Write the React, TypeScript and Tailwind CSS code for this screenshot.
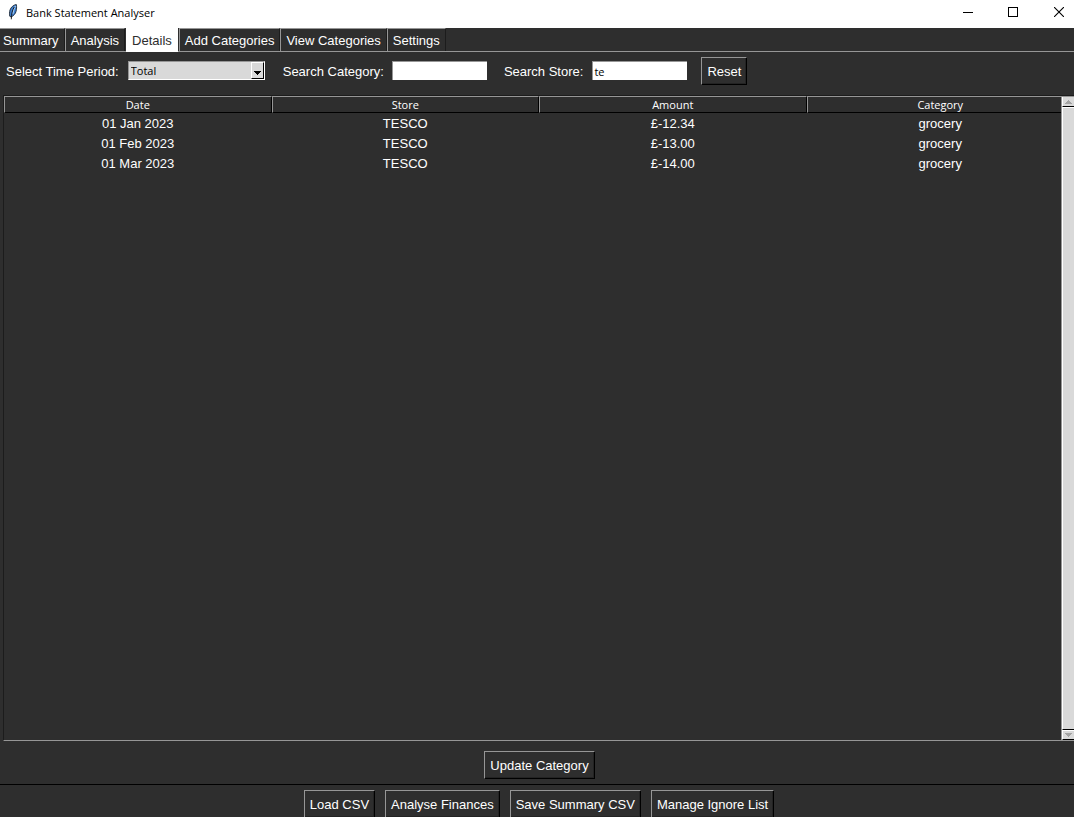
import React, { useState } from 'react';

const tabs = ['Summary', 'Analysis', 'Details', 'Add Categories', 'View Categories', 'Settings'];

const columns = ['Date', 'Store', 'Amount', 'Category'];

const transactions = [
  { date: '01 Jan 2023', store: 'TESCO', amount: '£-12.34', category: 'grocery' },
  { date: '01 Feb 2023', store: 'TESCO', amount: '£-13.00', category: 'grocery' },
  { date: '01 Mar 2023', store: 'TESCO', amount: '£-14.00', category: 'grocery' },
];

const actions = ['Load CSV', 'Analyse Finances', 'Save Summary CSV', 'Manage Ignore List'];

const FeatherIcon = () => (
  <svg width="16" height="16" viewBox="0 0 16 16" aria-hidden="true">
    <path d="M10.300 0.500C7.500 1 5 3 4 6c-.6 2-.7 4.500-.2 6.300L5.200 13C8 11.500 9.500 9.500 10 7.500c.6-2.300.8-4.500.3-7z" fill="#3f7fd0" stroke="#1c2733" strokeWidth="0.900" />
    <path d="M9.500 2C8 4 7.300 6.500 6.800 10" stroke="#a5d0fa" strokeWidth="1.200" fill="none" />
    <path d="M8.300 3C6.300 6 5.300 10 5.300 15.300" stroke="#111" strokeWidth="0.900" fill="none" />
  </svg>
);

const TitleBar = () => (
  <header className="flex h-7 shrink-0 items-start justify-between bg-white text-black">
    <div className="flex h-6 items-center gap-1 pl-[6px]">
      <FeatherIcon />
      <h1 className="pt-[2px] font-['Open_Sans',sans-serif] text-[11px] leading-4">Bank Statement Analyser</h1>
    </div>
    <div className="flex h-6 items-center">
      <button aria-label="Minimise" className="flex w-[45px] justify-center">
        <svg width="10" height="10" viewBox="0 0 10 10" shapeRendering="crispEdges">
          <path d="M0 5.500h10" stroke="#000" />
        </svg>
      </button>
      <button aria-label="Maximise" className="flex w-[45px] justify-center">
        <svg width="10" height="10" viewBox="0 0 10 10" shapeRendering="crispEdges">
          <rect x="0.500" y="0.500" width="9" height="9" fill="none" stroke="#000" />
        </svg>
      </button>
      <button aria-label="Close" className="flex w-[39px] justify-end pr-[10px]">
        <svg width="10" height="10" viewBox="0 0 10 10">
          <path d="M0 0l10 10M10 0L0 10" stroke="#000" strokeWidth="1.100" />
        </svg>
      </button>
    </div>
  </header>
);

const RaisedButton = ({ children, onClick }: { children: React.ReactNode; onClick?: () => void }) => (
  <button
    onClick={onClick}
    className="h-7 shrink-0 border border-t-[#969696] border-r-black border-b-black border-l-[#969696] px-[5px] pt-[2px] text-[13px] leading-4 shadow-[inset_-1px_-1px_0_#232323]"
  >
    {children}
  </button>
);

const TextField = ({ id, value, onChange }: { id: string; value: string; onChange: (value: string) => void }) => (
  <input
    id={id}
    type="text"
    value={value}
    onChange={(e) => onChange(e.target.value)}
    className="h-[19px] w-[95px] border-t border-l border-[#969696] bg-white px-px font-['Open_Sans',sans-serif] text-[11px] text-black outline-none"
  />
);

const ScrollBar = () => (
  <div className="absolute top-0 right-0 bottom-0 flex w-[13px] flex-col border-t border-l border-t-[#969696] border-l-[#969696] bg-[#d9d9d9]">
    <button aria-label="Scroll up" className="flex h-[10px] items-center justify-center border-b border-l border-b-black border-l-white">
      <svg width="7" height="4" viewBox="0 0 7 4" shapeRendering="crispEdges">
        <path d="M3 0h1v1h1v1h1v1h1v1H0V3h1V2h1V1h1z" fill="#a3a3a3" />
      </svg>
    </button>
    <div className="flex-1 border-t border-b border-l border-t-white border-b-black border-l-white" />
    <button aria-label="Scroll down" className="flex h-[10px] items-center justify-center border-t border-b border-l border-t-white border-b-black border-l-white">
      <svg width="7" height="4" viewBox="0 0 7 4" shapeRendering="crispEdges">
        <path d="M0 0h7v1H6v1H5v1H4v1H3V3H2V2H1V1H0z" fill="#a3a3a3" />
      </svg>
    </button>
  </div>
);

const App = () => {
  const [activeTab, setActiveTab] = useState('Details');
  const [period, setPeriod] = useState('Total');
  const [category, setCategory] = useState('');
  const [store, setStore] = useState('te');

  const handleReset = () => {
    setPeriod('Total');
    setCategory('');
    setStore('');
  };

  return (
    <div className="flex h-screen flex-col overflow-hidden bg-[#2e2e2e] font-['Liberation_Sans',Arial,sans-serif] text-[13px] leading-4 text-white">
      <TitleBar />

      {/* Tabs */}
      <nav className="flex h-6 shrink-0 border-b border-[#969696]">
        {tabs.map((tab, i) => (
          <button
            key={tab}
            onClick={() => setActiveTab(tab)}
            className={
              tab === activeTab
                ? '-mb-px ml-px border-x border-white bg-white px-[5px] pt-px text-[#2e2e2e]'
                : `border-t border-r border-t-[#969696] border-r-[#1c1c1c] pt-px ${i === 0 ? 'pl-[3px]' : 'border-l border-l-[#969696] pl-[5px]'} pr-[5px] [button.bg-white+&]:ml-px`
            }
          >
            {tab}
          </button>
        ))}
      </nav>

      {/* Filters */}
      <div className="flex h-[43px] shrink-0 items-center pb-[6px] pl-[6px]">
        <label htmlFor="period" className="pt-[3px] pr-[9px]">Select Time Period:</label>
        <div className="relative mr-[18px] flex">
          <select
            id="period"
            value={period}
            onChange={(e) => setPeriod(e.target.value)}
            className="h-[19px] w-[137px] appearance-none border border-t-[#969696] border-r-white border-b-white border-l-[#969696] bg-[#d9d9d9] px-[2px] font-['Open_Sans',sans-serif] text-[11px] leading-4 text-black outline-none"
          >
            <option>Total</option>
          </select>
          <span className="pointer-events-none absolute top-px right-px bottom-px flex w-[13px] items-end justify-center border border-t-white border-r-black border-b-black border-l-white pb-[3px]">
            <svg width="7" height="4" viewBox="0 0 7 4" shapeRendering="crispEdges">
              <path d="M0 0h7v1H6v1H5v1H4v1H3V3H2V2H1V1H0z" fill="#000" />
            </svg>
          </span>
        </div>
        <label htmlFor="category" className="pt-[3px] pr-2">Search Category:</label>
        <TextField id="category" value={category} onChange={setCategory} />
        <label htmlFor="store" className="pt-[3px] pr-[9px] pl-[17px]">Search Store:</label>
        <TextField id="store" value={store} onChange={setStore} />
        <div className="ml-[14px] flex">
          <RaisedButton onClick={handleReset}>Reset</RaisedButton>
        </div>
      </div>

      {/* Transactions */}
      <main className="relative ml-[3px] min-h-0 flex-1 border-t border-b border-l border-t-[#1c1c1c] border-b-[#969696] border-l-[#1c1c1c]">
        <table className="w-full table-fixed border-separate border-spacing-0 text-center">
          <thead>
            <tr>
              {columns.map((column) => (
                <th
                  key={column}
                  className="h-[17px] border border-t-[#969696] border-r-black border-b-black border-l-[#969696] p-0 font-['Open_Sans',sans-serif] text-[11px] leading-[15px] font-normal"
                >
                  {column}
                </th>
              ))}
            </tr>
          </thead>
          <tbody>
            {transactions.map((row) => (
              <tr key={row.date} className="h-5">
                <td className="p-0 pt-[2px]">{row.date}</td>
                <td className="p-0 pt-[2px]">{row.store}</td>
                <td className="p-0 pt-[2px]">{row.amount}</td>
                <td className="p-0 pt-[2px]">{row.category}</td>
              </tr>
            ))}
          </tbody>
        </table>
        <ScrollBar />
      </main>

      <div className="flex h-11 shrink-0 justify-center border-b border-black pt-[10px] pl-[5px]">
        <RaisedButton>Update Category</RaisedButton>
      </div>

      {/* Actions */}
      <footer className="flex h-8 shrink-0 justify-center gap-[10px] overflow-hidden pt-[5px] pl-[4px]">
        {actions.map((action) => (
          <RaisedButton key={action}>{action}</RaisedButton>
        ))}
      </footer>
    </div>
  );
};

export default App;
